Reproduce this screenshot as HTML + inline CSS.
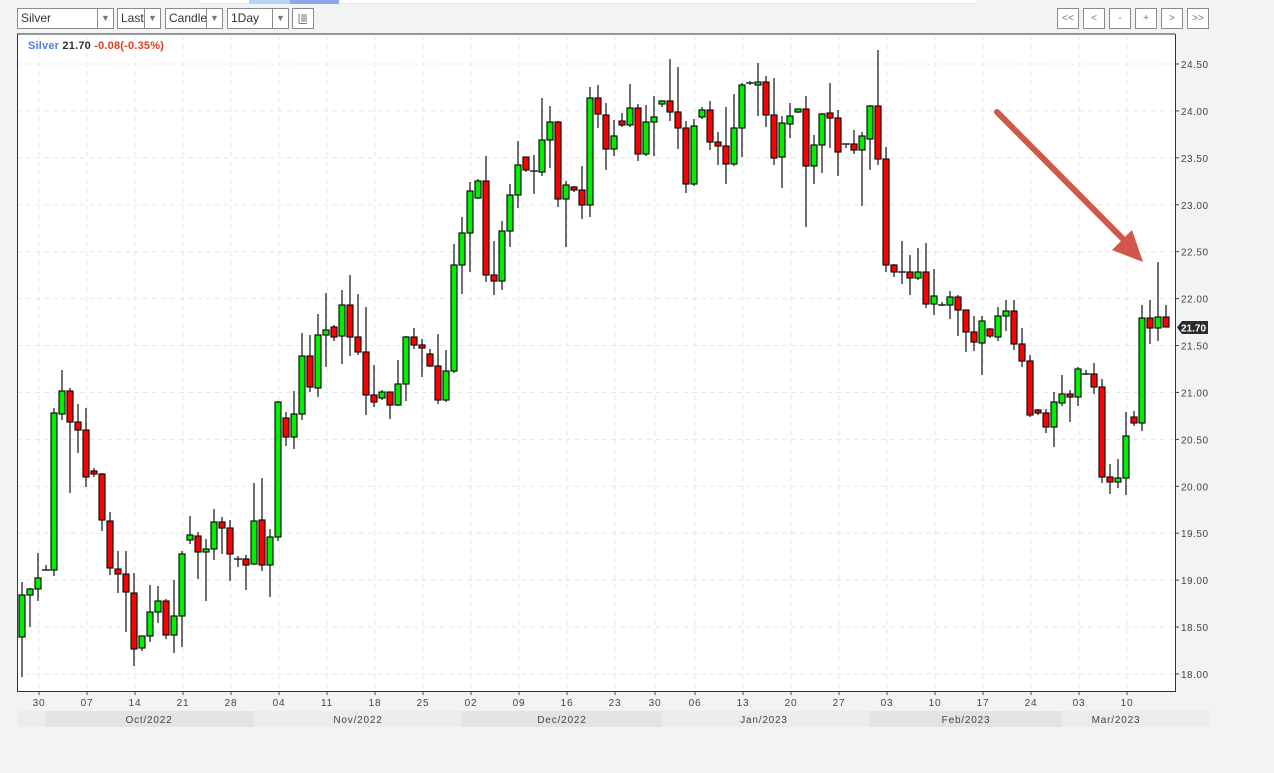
<!DOCTYPE html>
<html><head><meta charset="utf-8"><style>
body{margin:0;background:#f2f3f5;width:1274px;height:773px;overflow:hidden;font-family:"Liberation Sans",sans-serif;position:relative}
.sel{position:absolute;top:8px;height:19px;border:1px solid #8a8a8a;background:#fff;font-size:12px;color:#333;line-height:19px;box-sizing:content-box;overflow:hidden;white-space:nowrap}
.sel span{padding-left:3px}
.sel .ar{position:absolute;right:0;top:0;width:15px;height:19px;border-left:1px solid #8a8a8a;background:#fff;text-align:center;font-size:9px;color:#777}
.nb{position:absolute;top:8px;width:20px;height:19px;border:1px solid #8a8a8a;background:#fff;font-size:10px;color:#777;text-align:center;line-height:19px}
</style></head><body>
<div style="position:absolute;left:200px;top:0;width:776px;height:3px;background:#fff;border-bottom:1px solid #e5e5e5"></div>
<div style="position:absolute;left:249px;top:0;width:41px;height:4px;background:#b9d4f4"></div>
<div style="position:absolute;left:290px;top:0;width:49px;height:4px;background:#8da8ea"></div>
<div class="sel" style="left:17px;width:95px"><span>Silver</span><div class="ar">▼</div></div>
<div class="sel" style="left:117px;width:42px"><span>Last</span><div class="ar">▼</div></div>
<div class="sel" style="left:165px;width:56px"><span>Candle</span><div class="ar">▼</div></div>
<div class="sel" style="left:227px;width:60px"><span>1Day</span><div class="ar">▼</div></div>
<div class="sel" style="left:292px;width:20px"><svg width="20" height="19"><g stroke="#777" stroke-width="1"><line x1="6" y1="5" x2="6" y2="14"/><line x1="8" y1="6" x2="14" y2="6"/><line x1="8" y1="8" x2="14" y2="8"/><line x1="8" y1="10" x2="14" y2="10"/><line x1="8" y1="12" x2="14" y2="12"/><line x1="6" y1="14.5" x2="14" y2="14.5"/></g></svg></div>
<div class="nb" style="left:1057px">&lt;&lt;</div>
<div class="nb" style="left:1083px">&lt;</div>
<div class="nb" style="left:1109px">-</div>
<div class="nb" style="left:1135px">+</div>
<div class="nb" style="left:1161px">&gt;</div>
<div class="nb" style="left:1187px">&gt;&gt;</div>
<svg id="c" width="1274" height="773" style="position:absolute;left:0;top:0" font-family="Liberation Sans, sans-serif"></svg>
<script>
var S='';
S+='<rect x="17" y="34" width="1158" height="657" fill="#fff"/>';
var xs=[39,87,135,183,231,279,327,375,423,471,519,567,615,655,695,743,791,839,887,935,983,1031,1079,1127];
var xl=['30','07','14','21','28','04','11','18','25','02','09','16','23','30','06','13','20','27','03','10','17','24','03','10'];
for(var k=0;k<14;k++){var y=64+k*46.92;S+='<line x1="17" x2="1175" y1="'+y+'" y2="'+y+'" stroke="#e8e8e8" stroke-dasharray="5,4"/>';
S+='<line x1="1175" x2="1179" y1="'+y+'" y2="'+y+'" stroke="#444"/>';
S+='<text x="1181" y="'+(y+4)+'" font-size="10" fill="#444" letter-spacing="0.5">'+(24.5-k*0.5).toFixed(2)+'</text>';}
xs.forEach(function(x,i){S+='<line x1="'+x+'" x2="'+x+'" y1="35" y2="691" stroke="#e8e8e8" stroke-dasharray="5,4"/>';
S+='<line x1="'+x+'" x2="'+x+'" y1="691" y2="695" stroke="#444"/>';
S+='<text x="'+x+'" y="706" font-size="10" fill="#444" text-anchor="middle" letter-spacing="0.8">'+xl[i]+'</text>';});
var D=[['g',582,595,637,677],['g',588,589,595,627],['g',553,578,589,601],['d',565,570,570,570],['g',408,413,570,576],['g',370,391,414,420],['r',388,391,422,493],['r',404,422,430,453],['r',408,430,477,487],['r',468,471,474,477],['r',473,474,520,531],['r',512,521,568,575],['r',551,569,574,593],['r',551,574,592,632],['r',573,593,649,666],['g',636,636,648,651],['g',585,612,636,642],['g',586,601,612,623],['r',599,601,635,639],['g',580,616,635,653],['g',551,554,616,647],['g',516,535,540,544],['r',532,536,552,579],['g',539,549,552,601],['g',509,522,549,560],['r',517,522,528,554],['r',520,528,554,581],['d',556,559,559,567],['r',555,559,565,590],['g',483,521,564,565],['r',478,520,565,571],['g',529,537,565,597],['g',401,402,537,541],['r',412,418,437,446],['g',391,414,437,449],['g',333,356,414,420],['r',335,356,387,392],['g',314,335,388,397],['g',293,330,335,367],['r',325,327,337,341],['g',290,305,336,364],['r',275,305,337,356],['r',294,337,352,355],['r',307,352,395,415],['r',365,395,402,407],['g',390,392,398,400],['r',392,392,405,419],['g',360,384,405,406],['g',336,337,384,401],['r',328,337,345,349],['r',339,345,347,377],['r',349,354,366,367],['r',334,366,400,404],['g',350,371,400,402],['g',244,265,371,373],['g',217,233,265,294],['g',182,191,233,272],['g',179,181,198,199],['r',156,181,275,282],['r',241,275,281,295],['g',221,231,281,290],['g',184,195,231,247],['g',141,165,195,208],['r',157,157,170,172],['d',155,171,171,194],['g',98,140,172,176],['g',106,122,140,168],['r',121,122,199,207],['g',181,185,199,247],['r',186,187,190,192],['r',166,190,205,219],['g',87,98,205,217],['r',85,98,114,128],['r',103,115,149,170],['g',120,136,149,156],['r',113,121,125,127],['g',84,108,125,127],['r',104,108,154,161],['g',105,122,154,156],['g',96,117,122,156],['g',100,101,104,107],['r',59,101,112,121],['r',67,112,128,149],['r',121,128,184,193],['g',119,126,184,186],['g',107,110,117,119],['r',101,110,142,150],['r',132,142,146,165],['r',107,146,164,184],['g',94,128,164,166],['g',83,85,128,157],['d',81,83,83,85],['g',63,82,84,116],['r',76,82,115,127],['r',78,115,158,165],['g',116,123,157,188],['g',103,116,124,138],['g',109,109,112,113],['r',96,109,166,227],['g',135,145,166,184],['g',113,114,145,173],['r',83,113,118,148],['r',110,118,152,176],['d',144,144,144,148],['r',130,144,150,154],['g',132,136,150,206],['g',105,106,139,170],['r',50,106,159,165],['r',147,159,265,272],['r',264,265,272,277],['d',241,272,272,284],['r',255,272,278,295],['g',248,272,278,280],['r',243,272,304,308],['g',269,296,304,315],['d',302,305,305,306],['g',291,297,305,319],['r',295,297,310,336],['r',310,310,332,352],['r',316,332,342,351],['g',316,321,343,375],['r',328,329,336,338],['g',307,316,337,341],['g',300,311,316,331],['r',300,311,344,350],['r',328,344,361,367],['r',355,361,415,417],['r',409,410,413,415],['r',409,413,427,433],['g',392,402,427,447],['g',375,394,403,406],['r',390,394,396,422],['g',367,369,397,406],['d',370,374,374,375],['r',363,374,387,394],['r',379,387,477,483],['r',464,477,482,494],['g',459,478,482,488],['g',412,436,478,495],['r',411,417,423,426],['g',305,318,423,431],['r',300,318,328,344],['g',262,317,328,341],['r',305,317,327,327]];
D.forEach(function(d,i){var x=22+8*i;var c=d[0];
S+='<line x1="'+x+'" x2="'+x+'" y1="'+d[1]+'" y2="'+d[4]+'" stroke="#111" stroke-width="1.2"/>';
if(c=='d'){S+='<line x1="'+(x-4)+'" x2="'+(x+4)+'" y1="'+d[2]+'" y2="'+d[2]+'" stroke="#222" stroke-width="1.5"/>';}
else{var h=Math.max(d[3]-d[2],3);S+='<rect x="'+(x-3)+'" y="'+d[2]+'" width="6" height="'+h+'" fill="'+(c=='g'?'#00ee00':'#ff0000')+'" stroke="#111" stroke-width="1.2"/>';}});
S+='<line x1="17" y1="34" x2="1175" y2="34" stroke="#333"/><line x1="17.5" y1="34" x2="17.5" y2="691" stroke="#333"/><line x1="1175.5" y1="34" x2="1175.5" y2="691" stroke="#333"/><line x1="17" y1="691.5" x2="1176" y2="691.5" stroke="#333"/>';
var segs=[[17,46,'#ececed'],[46,254,'#e3e3e5'],[254,462,'#ececed'],[462,662,'#e3e3e5'],[662,870,'#ececed'],[870,1062,'#e3e3e5'],[1062,1209,'#ececed']];
segs.forEach(function(s){S+='<rect x="'+s[0]+'" y="711" width="'+(s[1]-s[0])+'" height="16" fill="'+s[2]+'"/>';});
[['Oct/2022',149],['Nov/2022',358],['Dec/2022',562],['Jan/2023',764],['Feb/2023',966],['Mar/2023',1116]].forEach(function(m){S+='<text x="'+m[1]+'" y="723" font-size="10" fill="#444" text-anchor="middle" letter-spacing="0.8">'+m[0]+'</text>';});
S+='<path d="M1177 327.5 L1182 321 L1208 321 L1208 334 L1182 334 Z" fill="#2b2b2b"/><text x="1181" y="331.5" font-size="10" fill="#fff" font-weight="bold">21.70</text>';
S+='<text x="28" y="49" font-size="11" font-weight="bold" letter-spacing="0.2"><tspan fill="#4a7ff0">Silver</tspan><tspan fill="#333"> 21.70 </tspan><tspan fill="#e03c1e">-0.08(-0.35%)</tspan></text>';
S+='<line x1="997" y1="112" x2="1130" y2="246" stroke="#d0574a" stroke-width="6" stroke-linecap="round"/><path d="M1143 262 L1112 250 L1132 230 Z" fill="#d0574a"/>';
document.getElementById('c').innerHTML=S;
</script>
</body></html>
